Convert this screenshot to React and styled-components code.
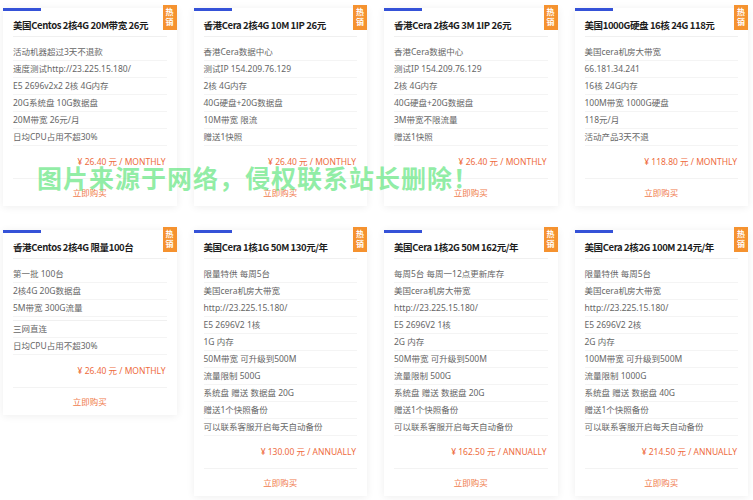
import React from "react";
import styled, { createGlobalStyle } from "styled-components";

const plans = [
  {
    title: "美国Centos 2核4G 20M带宽 26元",
    features: ["活动机器超过3天不退款", "速度测试http://23.225.15.180/", "E5 2696v2x2 2核 4G内存", "20G系统盘 10G数据盘", "20M带宽 26元/月", "日均CPU占用不超30%"],
    price: "¥ 26.40 元 / MONTHLY",
  },
  {
    title: "香港Cera 2核4G 10M 1IP 26元",
    features: ["香港Cera数据中心", "测试IP 154.209.76.129", "2核 4G内存", "40G硬盘+20G数据盘", "10M带宽 限流", "赠送1快照"],
    price: "¥ 26.40 元 / MONTHLY",
  },
  {
    title: "香港Cera 2核4G 3M 1IP 26元",
    features: ["香港Cera数据中心", "测试IP 154.209.76.129", "2核 4G内存", "40G硬盘+20G数据盘", "3M带宽不限流量", "赠送1快照"],
    price: "¥ 26.40 元 / MONTHLY",
  },
  {
    title: "美国1000G硬盘 16核 24G 118元",
    features: ["美国cera机房大带宽", "66.181.34.241", "16核 24G内存", "100M带宽 1000G硬盘", "118元/月", "活动产品3天不退"],
    price: "¥ 118.80 元 / MONTHLY",
  },
  {
    title: "香港Centos 2核4G 限量100台",
    features: ["第一批 100台", "2核4G 20G数据盘", "5M带宽 300G流量", "", "三网直连", "日均CPU占用不超30%"],
    price: "¥ 26.40 元 / MONTHLY",
  },
  {
    title: "美国Cera 1核1G 50M 130元/年",
    features: ["限量特供 每周5台", "美国cera机房大带宽", "http://23.225.15.180/", "E5 2696V2 1核", "1G 内存", "50M带宽 可升级到500M", "流量限制 500G", "系统盘 赠送 数据盘 20G", "赠送1个快照备份", "可以联系客服开启每天自动备份"],
    price: "¥ 130.00 元 / ANNUALLY",
  },
  {
    title: "美国Cera 1核2G 50M 162元/年",
    features: ["每周5台 每周一12点更新库存", "美国cera机房大带宽", "http://23.225.15.180/", "E5 2696V2 1核", "2G 内存", "50M带宽 可升级到500M", "流量限制 500G", "系统盘 赠送 数据盘 20G", "赠送1个快照备份", "可以联系客服开启每天自动备份"],
    price: "¥ 162.50 元 / ANNUALLY",
  },
  {
    title: "美国Cera 2核2G 100M 214元/年",
    features: ["限量特供 每周5台", "美国cera机房大带宽", "http://23.225.15.180/", "E5 2696V2 2核", "2G 内存", "100M带宽 可升级到500M", "流量限制 1000G", "系统盘 赠送 数据盘 40G", "赠送1个快照备份", "可以联系客服开启每天自动备份"],
    price: "¥ 214.50 元 / ANNUALLY",
  },
];

const App = () => {
  return (
    <Page>
      <GlobalStyle />
      <Grid>
        {plans.map((plan, idx) => (
          <Card key={idx}>
            <Badge>
              热<br />销
            </Badge>
            <Title>{plan.title}</Title>
            <Features>
              {plan.features.map((f, i) =>
                f ? <Feature key={i}>{f}</Feature> : <Spacer key={i} />
              )}
            </Features>
            <Price>{plan.price}</Price>
            <Buy>立即购买</Buy>
          </Card>
        ))}
      </Grid>
      {/* 워터마크 */}
      <Watermark>图片来源于网络，侵权联系站长删除！</Watermark>
    </Page>
  );
};

const GlobalStyle = createGlobalStyle`
  body {
    margin: 0;
    background: #fff;
    font-family: "Noto Sans", "Noto Sans CJK SC", sans-serif;
  }
`;
const Page = styled.div`
  position: relative;
  width: 753px;
  height: 500px;
  overflow: hidden;
`;
const Grid = styled.div`
  display: grid;
  grid-template-columns: repeat(4, 1fr);
  column-gap: 17px;
  row-gap: 24px;
  align-items: start;
  padding: 8px 5px 0 3px;
`;
const Card = styled.div`
  position: relative;
  background: #fff;
  box-shadow: 0 1px 8px rgba(0, 0, 0, 0.07);
  padding: 0 10px;
  &::before {
    content: "";
    position: absolute;
    top: 0;
    left: 0;
    width: 38px;
    height: 3px;
    background: #3552d8;
  }
`;
const Badge = styled.div`
  position: absolute;
  top: -3px;
  right: 0;
  width: 14px;
  height: 25px;
  background: #f5922f;
  color: #fff;
  font-family: "Noto Sans CJK SC", sans-serif;
  font-size: 8px;
  font-weight: bold;
  line-height: 10px;
  text-align: center;
  padding-top: 2px;
  box-sizing: border-box;
`;
const Title = styled.div`
  padding: 8px 0 2px;
  font-family: "Noto Sans CJK SC", sans-serif;
  font-size: 9.5px;
  font-weight: bold;
  letter-spacing: -0.4px;
  line-height: 18px;
  color: #1d1d1d;
  border-bottom: 1px solid #f0f0f0;
  white-space: nowrap;
`;
const Features = styled.ul`
  list-style: none;
  margin: 7px 0 0;
  padding: 0;
`;
const Feature = styled.li`
  font-size: 8.5px;
  line-height: 16px;
  color: #666;
  border-bottom: 1px solid #f4f4f4;
  white-space: nowrap;
`;
const Spacer = styled.li`
  height: 3px;
  border-bottom: 1px solid #f0f0f0;
`;
const Price = styled.div`
  padding: 8px 1px 8px 0;
  font-size: 8.5px;
  line-height: 16px;
  color: #ee6b3d;
  text-align: right;
  border-bottom: 1px solid #f3f3f3;
`;
const Buy = styled.div`
  padding: 6px 0 5px;
  font-size: 8.5px;
  line-height: 16px;
  color: #f07b4c;
  text-align: center;
`;
const Watermark = styled.div`
  position: absolute;
  left: 37px;
  top: 163px;
  font-family: "Noto Sans CJK SC", sans-serif;
  font-size: 25px;
  font-weight: 700;
  letter-spacing: 1px;
  line-height: 28px;
  color: rgba(90, 228, 120, 0.68);
  white-space: nowrap;
  pointer-events: none;
`;

export default App;
